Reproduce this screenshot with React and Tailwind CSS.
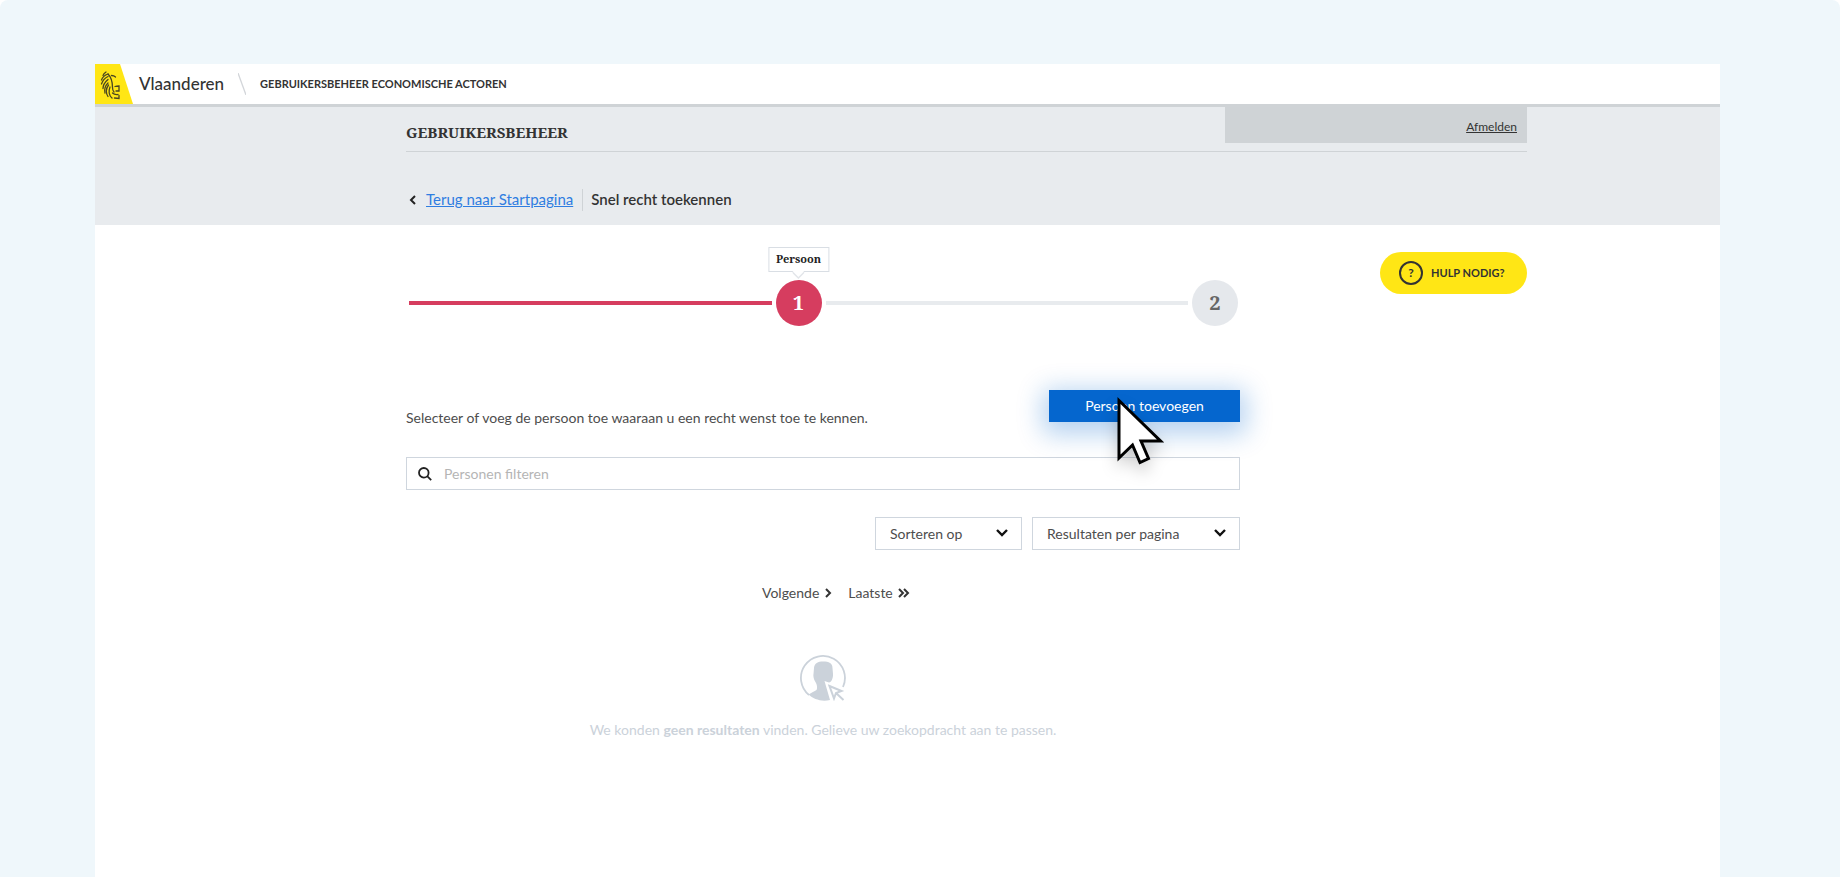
import React, { useState } from "react";

const Leeuw = () => (
  <svg viewBox="0 0 38 40" className="h-10 w-[38px] shrink-0" aria-hidden="true">
    <path d="M0 0h25l13 40H0z" fill="#ffe615" />
    <g fill="none" stroke="#4a4622" strokeWidth="1.3" strokeLinecap="round">
      <path d="M8 11.500c.5-1.500 1.500-2.500 3-3.500" />
      <path d="M6.500 16c1-3 3.500-5 6.500-6" />
      <path d="M6.500 20c1-3.500 3.500-6 6.500-7.500" />
      <path d="M8 24.500c0-3.500 2-6.500 5-9" />
      <path d="M10 29c-1-4 .5-7.500 3-10" />
      <path d="M13 32.500c-2.500-4-2-8 .5-11.500" />
      <path d="M17 34c-3.500-3-3.500-7-2-11" />
      <path d="M13 10c3.500 3.500 4.500 8.500 4.500 13.500 0 2 .5 3.500 1.500 4.500" />
      <path d="M16.500 11.500c1.500 0 3 .5 4 1.500" />
      <path d="M20 22.500c1.500-.5 3-.5 4-.5v5h-3" />
      <path d="M17.500 29c2 2 4 1.500 5.500 1.500" />
      <path d="M19.500 34l4.500.5v-3" />
    </g>
  </svg>
);

const Chevron = ({ className, double }) => (
  <svg
    viewBox={double ? "0 0 12 10" : "0 0 7 10"}
    className={className}
    fill="none"
    stroke="currentColor"
    strokeWidth="2"
    aria-hidden="true"
  >
    <path d="M1 1l4 4-4 4" />
    {double && <path d="M6 1l4 4-4 4" />}
  </svg>
);

const SelectBox = ({ label, className }) => (
  <div className={`relative ${className}`}>
    <select
      aria-label={label}
      className="block h-[33px] w-full appearance-none border border-[#cfd6de] bg-white pl-[14px] text-sm text-[#4d4d4d]"
    >
      <option>{label}</option>
    </select>
    <svg
      viewBox="0 0 12 8"
      className="pointer-events-none absolute top-3 right-[14px] h-2 w-3"
      fill="none"
      stroke="#111"
      strokeWidth="2.4"
      aria-hidden="true"
    >
      <path d="M1 1l5 5 5-5" />
    </svg>
  </div>
);

const Stappen = () => (
  <div className="flex items-center pr-[2px] pl-[3px]">
    <div className="h-1 flex-1 bg-[#d63d5f]" />
    <div className="relative mx-1 flex size-[46px] items-center justify-center rounded-full bg-[#d63d5f] font-['Noto_Serif','DejaVu_Serif',serif] text-xl font-bold text-white">
      1
      <div className="absolute bottom-[54px] left-1/2 -translate-x-1/2 border border-[#d9dee4] bg-white px-[7px] pb-[2px] text-[11px] leading-[21px] text-[#222]">
        Persoon
        <svg
          viewBox="0 0 12 8"
          className="absolute top-full left-1/2 h-2 w-3 -translate-x-1/2"
          aria-hidden="true"
        >
          <path d="M0 0h12L6 6z" fill="#fff" />
          <path d="M0 1l6 6 6-6" fill="none" stroke="#e3e6ea" strokeWidth="1.5" />
        </svg>
      </div>
    </div>
    <div className="h-1 flex-1 bg-[#e8ebee]" />
    <div className="ml-1 flex size-[46px] items-center justify-center rounded-full bg-[#e5e8ec] font-['Noto_Serif','DejaVu_Serif',serif] text-xl font-bold text-[#666]">
      2
    </div>
  </div>
);

const GeenResultaten = () => (
  <div className="mt-[52px] flex flex-col items-center text-[#cbd2da]">
    <svg viewBox="0 0 46 46" className="size-[46px]" aria-hidden="true">
      <path
        d="M43 32A22 22 0 1 0 9 40"
        fill="none"
        stroke="currentColor"
        strokeWidth="1.8"
      />
      <path
        d="M23 6.500c6 0 9.500 1.500 9.500 6.500l.5 6c.2 4-1.500 8-4 8.500L24.500 26l5.500 19C21 47 13.500 44 8.500 39.500c3-2 6-3 8-4.500 1-2 .5-5-.5-7-2-3-3-6-2.500-9l.5-6c.5-5 4-6.500 9-6.500z"
        fill="currentColor"
      />
      <path
        d="M29.500 31l12 5-5.500 2-2 5.500zM36 38l7.500 7"
        fill="none"
        stroke="currentColor"
        strokeWidth="2"
      />
    </svg>
    <p className="mt-[19px] text-sm leading-5">
      We konden <strong className="font-bold">geen resultaten</strong> vinden. Gelieve uw
      zoekopdracht aan te passen.
    </p>
  </div>
);

const App = () => {
  const [filter, setFilter] = useState("");

  return (
    <div className="min-h-screen rounded-t-lg bg-[#eff7fb] pt-16 pr-[120px] pl-[95px] font-['Lato','Liberation_Sans',sans-serif] text-sm text-[#4d4d4d]">
      <div className="flex min-h-[calc(100vh-64px)] flex-col bg-white">
        <header className="flex h-10 items-center">
          <Leeuw />
          <span className="ml-[6px] text-[17px] font-medium text-[#333]">Vlaanderen</span>
          <svg viewBox="0 0 8 22" className="mx-[14px] h-[22px] w-2" aria-hidden="true">
            <path d="M0 0l8 22" stroke="#d3d6da" strokeWidth="1.3" />
          </svg>
          <span className="text-[11px] font-bold text-[#333]">
            GEBRUIKERSBEHEER ECONOMISCHE ACTOREN
          </span>
        </header>

        <div className="h-[121px] border-t-[3px] border-[#cfd3d6] bg-[#e8ebee] pr-[193px] pl-[311px]">
          <div className="flex h-[45px] justify-between border-b border-[#cfd3d6]">
            <h1 className="pt-[13px] font-['Noto_Serif','DejaVu_Serif',serif] text-[15px] leading-6 font-bold text-[#333]">
              GEBRUIKERSBEHEER
            </h1>
            <div className="flex h-9 w-[302px] items-center justify-end bg-[#cfd3d6] pt-1 pr-[10px]">
              <a href="#afmelden" className="text-xs text-[#333] underline">
                Afmelden
              </a>
            </div>
          </div>
          <nav className="mt-9 flex h-6 items-center text-[15px] leading-5">
            <Chevron className="mr-[10px] ml-[3px] h-[10px] w-[7px] rotate-180 text-[#222]" />
            <a href="#start" className="pb-[2px] text-[#2f7de1] underline">
              Terug naar Startpagina
            </a>
            <span className="ml-[9px] border-l border-[#cfd3d6] pb-[2px] pl-2 font-semibold text-[#333]">
              Snel recht toekennen
            </span>
          </nav>
        </div>

        <main className="flex pr-[193px] pl-[311px]">
          <div className="min-w-0 flex-1 pt-[55px]">
            <Stappen />

            <div className="mt-16 flex items-start justify-between">
              <p className="mt-[18px] leading-5">
                Selecteer of voeg de persoon toe waaraan u een recht wenst toe te kennen.
              </p>
              <div className="relative">
                <button
                  type="button"
                  className="h-8 w-[191px] bg-[#0566ce] text-white shadow-[0_6px_26px_6px_rgba(5,102,206,0.3)]"
                >
                  Persoon toevoegen
                </button>
                <svg
                  viewBox="0 0 48 70"
                  className="absolute top-[5px] left-[67px] z-10 h-[70px] w-12 drop-shadow-[0_8px_8px_rgba(0,0,0,0.2)]"
                  aria-hidden="true"
                >
                  <path
                    d="M3 5.500V63l13.500-13L24 67.500l8.500-4L25 46h19.500z"
                    fill="#fff"
                    stroke="#000"
                    strokeWidth="3"
                  />
                </svg>
              </div>
            </div>

            <div className="mt-[29px] flex h-[33px] items-center border border-[#cfd6de] bg-white">
              <svg
                viewBox="0 0 14 14"
                className="ml-[11px] size-[14px] shrink-0"
                fill="none"
                stroke="#222"
                strokeWidth="1.8"
                aria-hidden="true"
              >
                <circle cx="5.800" cy="5.800" r="4.800" />
                <path d="M9.200 9.200l4 4" />
              </svg>
              <input
                type="text"
                aria-label="Personen filteren"
                value={filter}
                onChange={(e) => setFilter(e.target.value)}
                placeholder="Personen filteren"
                className="ml-3 min-w-0 flex-1 placeholder:text-[#b5b5b5] focus:outline-none"
              />
            </div>

            <div className="mt-[27px] flex justify-end gap-[10px]">
              <SelectBox label="Sorteren op" className="w-[147px]" />
              <SelectBox label="Resultaten per pagina" className="w-[208px]" />
            </div>

            <div className="mt-[33px] flex items-center gap-4 pl-[356px] leading-5">
              <a href="#volgende" className="flex items-center gap-[6px]">
                Volgende
                <Chevron className="h-[10px] w-[7px] text-[#333]" />
              </a>
              <a href="#laatste" className="flex items-center gap-[5px]">
                Laatste
                <Chevron double className="h-[10px] w-3 text-[#333]" />
              </a>
            </div>

            <GeenResultaten />
          </div>

          <aside className="flex w-[287px] items-start justify-end pt-[27px]">
            <button
              type="button"
              className="flex h-[42px] w-[147px] items-center rounded-full bg-[#ffe615] pl-[19px] text-[11px] font-bold text-[#333]"
            >
              <span className="mr-2 flex size-6 items-center justify-center rounded-full border-2 border-[#333] text-xs">
                ?
              </span>
              HULP NODIG?
            </button>
          </aside>
        </main>
      </div>
    </div>
  );
};

export default App;
